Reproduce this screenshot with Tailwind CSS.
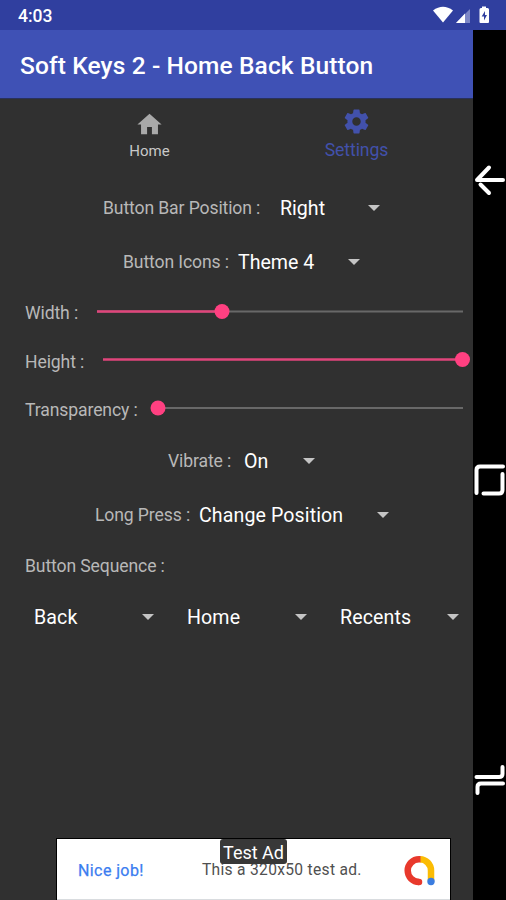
<!DOCTYPE html>
<html lang="en">
<head>
<meta charset="utf-8">
<title>Soft Keys 2 - Home Back Button</title>
<script src="https://cdn.jsdelivr.net/npm/@tailwindcss/browser@4"></script>
</head>
<body class="w-[506px] h-[900px] overflow-hidden bg-[#303030] font-[Roboto,sans-serif] whitespace-nowrap flex flex-col">
<header class="h-[30px] shrink-0 bg-[#303f9f] text-white flex items-center pl-[18px]">
  <span class="w-[415px] pt-[2px] text-[17.5px] font-medium">4:03</span>
  <svg class="w-[73px] h-[30px]" viewBox="433 0 73 30">
    <path d="M433 10.500Q443 3 453 10.500L443 22.500Z" fill="#fff"/>
    <path d="M470 9V23H456Z" fill="#7d87c6"/><path d="M465 13.500V23H456Z" fill="#fff"/>
    <path d="M482 8V6.500h4V8h1.500q1.500 0 1.500 1.500V22q0 1-1 1h-7.500q-1 0-1-1V9.500Q479.500 8 481 8Z" fill="#fff"/>
    <path d="M485 11L481.700 16.500H484V20.500L487 15H485Z" fill="#303f9f"/>
  </svg>
</header>
<div class="flex h-[870px]">
  <main class="w-[473px] shrink-0 flex flex-col">
    <h1 class="h-[69px] bg-[#3f51b5] border-b border-[#29315c] text-white text-[24.5px] tracking-[.12px] font-medium flex items-center pl-5 pt-[4px]">Soft Keys 2 - Home Back Button</h1>
    <nav class="h-[81px] flex pl-[46px] text-center">
      <div class="w-[207px] flex flex-col items-center pt-[11px] text-[#c8c8c8]">
        <svg class="w-[29px] h-[29px]" viewBox="0 0 24 24" fill="#a9a9a9"><path d="M10 20v-6h4v6h5v-8h3L12 3 2 12h3v8z"/></svg>
        <span class="text-[15px] leading-[20px] mt-[2px]">Home</span>
      </div>
      <div class="w-[207px] flex flex-col items-center pt-[8px] text-[#4251ab]">
        <svg class="w-[29px] h-[29px]" viewBox="0 0 24 24" fill="#4251ab"><path d="M19.430 12.980c.04-.32.07-.64.07-.98s-.03-.66-.07-.98l2.110-1.650c.19-.15.24-.42.12-.64l-2-3.460c-.12-.22-.39-.3-.61-.22l-2.490 1c-.52-.4-1.080-.73-1.690-.98l-.38-2.650C14.460 2.180 14.250 2 14 2h-4c-.25 0-.46.18-.49.42l-.38 2.650c-.61.25-1.170.59-1.690.98l-2.490-1c-.23-.09-.49 0-.61.22l-2 3.460c-.13.22-.07.49.12.64l2.110 1.650c-.04.32-.07.65-.07.98s.03.66.07.98l-2.110 1.650c-.19.15-.24.42-.12.64l2 3.460c.12.22.39.3.61.22l2.490-1c.52.4 1.080.73 1.690.98l.38 2.650c.03.24.24.42.49.42h4c.25 0 .46-.18.49-.42l.38-2.650c.61-.25 1.170-.59 1.690-.98l2.490 1c.23.09.49 0 .61-.22l2-3.460c.12-.22.07-.49-.12-.64l-2.110-1.650zM12 15.500c-1.930 0-3.500-1.570-3.500-3.500s1.570-3.500 3.500-3.500 3.500 1.570 3.500 3.500-1.570 3.500-3.500 3.500z"/></svg>
        <span class="text-[17.6px] tracking-[-.1px] leading-[22px] mt-[3px]">Settings</span>
      </div>
    </nav>
    <section class="flex flex-col text-[17.6px] tracking-[-.12px] text-[#b8b8b8]">
      <div class="h-[56px] flex items-center pl-[103px] pt-px">
        <span class="w-[177px]">Button Bar Position :</span><span class="w-[88px] text-[19.600px] tracking-normal text-white">Right</span>
        <svg class="w-3 h-[6px] mb-[2px]" viewBox="0 0 12 6"><path d="M0 0H12L6 6Z" fill="#c4c4c4"/></svg>
      </div>
      <div class="h-[52px] flex items-center pl-[123px] pt-px">
        <span class="w-[115px]">Button Icons :</span><span class="w-[110px] text-[19.600px] tracking-normal text-white">Theme 4</span>
        <svg class="w-3 h-[6px] mb-[2px]" viewBox="0 0 12 6"><path d="M0 0H12L6 6Z" fill="#c4c4c4"/></svg>
      </div>
      <div class="h-[48px] flex items-center pl-[25px]">
        <span class="w-[72px] pt-[2px]">Width :</span>
        <svg class="w-[376px] h-[18px]" viewBox="97 0 376 18"><path d="M97 8.500H463" stroke="#686868" stroke-width="2"/><path d="M97 8.500H222" stroke="#e0457b" stroke-width="2.500"/><circle cx="222" cy="8.500" r="7.500" fill="#ff4081"/></svg>
      </div>
      <div class="h-[49px] flex items-center pl-[25px]">
        <span class="w-[78px] pt-[3px]">Height :</span>
        <svg class="w-[370px] h-[18px]" viewBox="103 0 370 18"><path d="M103 7.500H463" stroke="#e0457b" stroke-width="2.500"/><circle cx="462.500" cy="7.500" r="7.500" fill="#ff4081"/></svg>
      </div>
      <div class="h-[48px] flex items-center pl-[25px]">
        <span class="w-[120px] pt-[2px]">Transparency :</span>
        <svg class="w-[328px] h-[18px]" viewBox="145 0 328 18"><path d="M158 8H463" stroke="#686868" stroke-width="2"/><circle cx="158" cy="8" r="7.500" fill="#ff4081"/></svg>
      </div>
      <div class="h-[56px] flex items-center pl-[168px] pt-px">
        <span class="w-[76px]">Vibrate :</span><span class="w-[59px] text-[19.600px] tracking-normal text-white">On</span>
        <svg class="w-3 h-[6px] mb-[2px]" viewBox="0 0 12 6"><path d="M0 0H12L6 6Z" fill="#c4c4c4"/></svg>
      </div>
      <div class="h-[52px] flex items-center pl-[95px] pt-px">
        <span class="w-[104px]">Long Press :</span><span class="w-[178px] text-[19.600px] tracking-[.1px] text-white">Change Position</span>
        <svg class="w-3 h-[6px] mb-[2px]" viewBox="0 0 12 6"><path d="M0 0H12L6 6Z" fill="#c4c4c4"/></svg>
      </div>
      <div class="h-[50px] flex items-center pl-[25px] pt-px">Button Sequence :</div>
      <div class="h-[52px] flex items-center pl-[34px] pt-px text-[19.600px] tracking-[.1px] text-white">
        <span class="w-[108px]">Back</span><svg class="w-3 h-[6px] mb-[2px]" viewBox="0 0 12 6"><path d="M0 0H12L6 6Z" fill="#c4c4c4"/></svg>
        <span class="ml-[33px] w-[108px]">Home</span><svg class="w-3 h-[6px] mb-[2px]" viewBox="0 0 12 6"><path d="M0 0H12L6 6Z" fill="#c4c4c4"/></svg>
        <span class="ml-[33px] w-[107px]">Recents</span><svg class="w-3 h-[6px] mb-[2px]" viewBox="0 0 12 6"><path d="M0 0H12L6 6Z" fill="#c4c4c4"/></svg>
      </div>
    </section>
    <aside class="relative mt-auto ml-[56px] w-[395px] h-[62px] bg-white border-t border-x border-black flex items-center pl-[21px] pt-[2px] shadow-[inset_0_-1px_0_#d9dcdf]">
      <span class="w-[124px] text-[16px] tracking-[.4px] text-[#3b7df0] [-webkit-text-stroke:.25px_#3b7df0]">Nice job!</span>
      <span class="w-[201px] text-[15.6px] tracking-[.3px] text-[#505050]">This a 320x50 test ad.</span>
      <svg class="w-[32px] h-[32px]" viewBox="403 854 32 32" fill="none" stroke-width="6.500"><path d="M420 858.300A11.200 11.200 0 0 1 431 869.500V880" stroke="#fbbc04"/><path d="M420.500 858.300H419A11.300 11.300 0 0 0 419 880.900" stroke="#e8392c"/><circle cx="419" cy="880.900" r="3.250" fill="#e8392c" stroke="none"/><circle cx="431" cy="880.500" r="3.700" fill="#3b7de0" stroke="none"/></svg>
      <span class="absolute left-[163px] top-0 w-[67px] h-[25px] rounded-[3px] bg-[#383838] text-white text-[18px] leading-[27px] text-center">Test Ad</span>
    </aside>
  </main>
  <div class="w-[33px] bg-black">
    <svg class="w-[33px] h-[870px]" viewBox="473 30 33 870" fill="none" stroke="#fff" stroke-width="4" stroke-linecap="round" stroke-linejoin="round">
      <path d="M503 180H477L489 167.500"/><path d="M480.500 184.500L489 193"/>
      <path d="M476.500 493V470Q476.500 466.500 480 466.500H503"/><path d="M483.500 493.500H499Q502.500 493.500 502.500 490V474"/>
      <path d="M476.500 777H499Q502.500 777 502.500 774V767"/><path d="M503 783.500H481Q477.500 783.500 477.500 787V793"/>
    </svg>
  </div>
</div>
</body>
</html>
